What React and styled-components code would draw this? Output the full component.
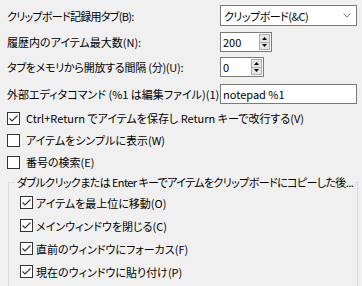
import React from 'react';
import styled, { createGlobalStyle } from 'styled-components';

const Global = createGlobalStyle`
  html, body { margin: 0; padding: 0; background: #f0f0f0; overflow: hidden; }
  body {
    font-family: "Noto Sans CJK JP", "Noto Sans", sans-serif;
    font-size: 11px;
    color: #000;
  }
`;

const Page = styled.div`
  width: 362px;
  height: 286px;
  overflow: hidden;
  box-sizing: border-box;
  padding: 5px 0 0 7px;
  font-feature-settings: "palt";
`;

const FieldRow = styled.div`
  display: flex;
  align-items: center;
  height: ${p => p.$h}px;
  margin-top: ${p => p.$mt || 0}px;
`;

const Label = styled.div`
  width: 213px;
  flex: none;
  white-space: nowrap;
  line-height: 16px;
  letter-spacing: ${p => p.$ls || 0}px;
`;

const Combo = styled.div`
  width: 137px;
  height: 100%;
  box-sizing: border-box;
  border: 1px solid #7a7a7a;
  background: #fff;
  display: flex;
  align-items: center;
  justify-content: space-between;
  padding: 0 5px 0 3px;
  white-space: nowrap;
  letter-spacing: -0.5px;
`;

const TextBox = styled.div`
  width: 137px;
  height: 100%;
  box-sizing: border-box;
  border: 1px solid #7a7a7a;
  background: #fff;
  display: flex;
  align-items: center;
  padding: 0 2px;
  white-space: nowrap;
`;

const Spinner = styled.div`
  width: ${p => p.$w}px;
  height: 100%;
  box-sizing: border-box;
  border: 1px solid #7a7a7a;
  background: #fff;
  display: flex;
  padding: 1px;
`;

const SpinValue = styled.div`
  flex: 1;
  display: flex;
  align-items: center;
  padding-left: 1px;
`;

const SpinCol = styled.div`
  width: 11px;
  display: flex;
  flex-direction: column;
`;

const SpinBtn = styled.div`
  flex: 1;
  box-sizing: border-box;
  border: 1px solid #adadad;
  ${p => (p.$down ? 'border-top: none;' : '')}
  background: #e5e5e5;
  display: flex;
  align-items: center;
  justify-content: center;
`;

const CheckRow = styled.div`
  display: flex;
  align-items: center;
  height: ${p => p.$h}px;
  margin-top: ${p => p.$mt || 0}px;
  white-space: nowrap;
  gap: ${p => p.$gap}px;
`;

const Box = styled.span`
  width: 13px;
  height: 13px;
  flex: none;
  box-sizing: border-box;
  border: 1px solid #333;
  background: #fff;
  display: flex;
  align-items: center;
  justify-content: center;
`;

const Group = styled.fieldset`
  margin: 1px 0 0 1px;
  width: 350px;
  box-sizing: border-box;
  border: 1px solid #dcdcdc;
  padding: 0;
`;

const Legend = styled.legend`
  margin-left: 6px;
  padding: 0 2px;
  line-height: 16px;
  white-space: nowrap;
  letter-spacing: -0.6px;
`;

const GroupBody = styled.div`
  padding: 1px 0 40px 11px;
`;

const Tri = ({ down }) => (
  <svg width="5" height="3" viewBox="0 0 5 3">
    <polygon points={down ? '0,0 5,0 2.5,3' : '0,3 5,3 2.5,0'} fill="#000" />
  </svg>
);

const Spin = ({ w, value }) => (
  <Spinner $w={w}>
    <SpinValue>{value}</SpinValue>
    <SpinCol>
      <SpinBtn><Tri /></SpinBtn>
      <SpinBtn $down><Tri down /></SpinBtn>
    </SpinCol>
  </Spinner>
);

const Check = ({ checked, h, mt, gap = 6, children }) => (
  <CheckRow $h={h} $mt={mt} $gap={gap}>
    <Box>
      {checked && (
        <svg width="11" height="11" viewBox="0 0 11 11">
          <polyline points="1.5,5.5 4,8 9.5,2.5" fill="none" stroke="#333" strokeWidth="1.1" />
        </svg>
      )}
    </Box>
    <span>{children}</span>
  </CheckRow>
);

export default function App() {
  return (
    <>
      <Global />
      <Page>
        <FieldRow $h={21}>
          <Label $ls={-0.7}>クリップボード記録用タブ(B):</Label>
          <Combo>
            <span>クリップボード(&amp;C)</span>
            <svg width="8" height="5" viewBox="0 0 8 5">
              <polyline points="0.5,0.5 4,4 7.5,0.5" fill="none" stroke="#7a7a7a" strokeWidth="1" />
            </svg>
          </Combo>
        </FieldRow>
        <FieldRow $h={20} $mt={6}>
          <Label>履歴内のアイテム最大数(N):</Label>
          <Spin w={52} value="200" />
        </FieldRow>
        <FieldRow $h={20} $mt={5}>
          <Label $ls={-0.25}>タブをメモリから開放する間隔 (分)(U):</Label>
          <Spin w={44} value="0" />
        </FieldRow>
        <FieldRow $h={20} $mt={7}>
          <Label>外部エディタコマンド (%1 は編集ファイル)(1):</Label>
          <TextBox>notepad %1</TextBox>
        </FieldRow>
        <Check checked h={22} mt={3}>Ctrl+Return でアイテムを保存し Return キーで改行する(V)</Check>
        <Check h={22}>アイテムをシンプルに表示(W)</Check>
        <Check h={22}>番号の検索(E)</Check>
        <Group>
          <Legend>ダブルクリックまたは Enter キーでアイテムをクリップボードにコピーした後...</Legend>
          <GroupBody>
            <Check checked h={23} gap={3}>アイテムを最上位に移動(O)</Check>
            <Check checked h={23} gap={3}>メインウィンドウを閉じる(C)</Check>
            <Check checked h={23} gap={3}>直前のウィンドウにフォーカス(F)</Check>
            <Check checked h={23} gap={3}>現在のウィンドウに貼り付け(P)</Check>
          </GroupBody>
        </Group>
      </Page>
    </>
  );
}
